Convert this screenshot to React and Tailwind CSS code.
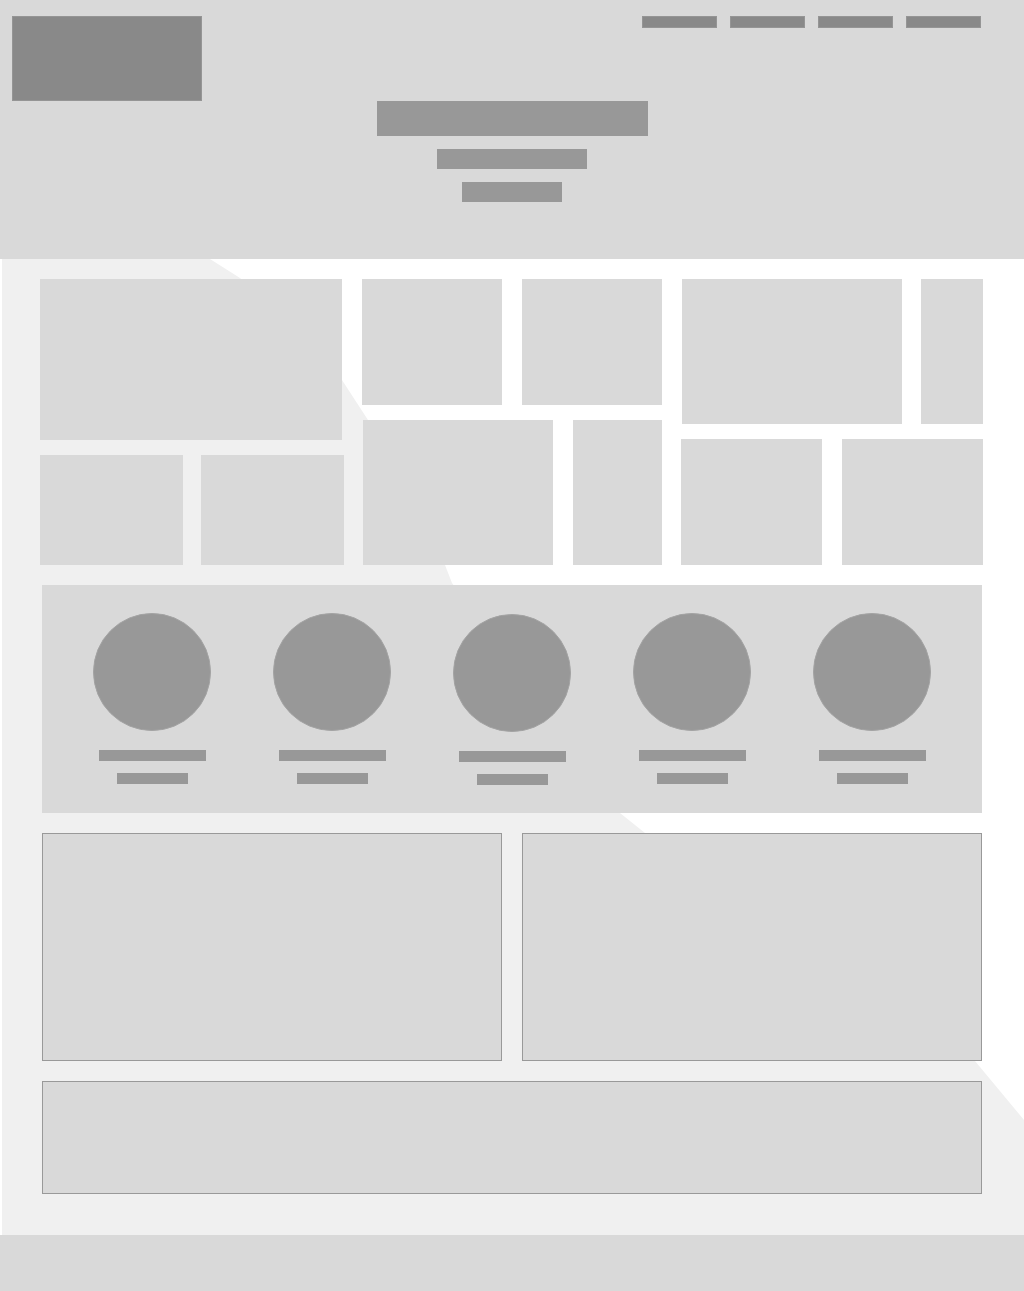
import React from 'react';

const navItems = [1, 2, 3, 4];
const people = [1, 2, 3, 4, 5];

function Block({ className }) {
  return <div className={'bg-[#d9d9d9] ' + className} />;
}

export default function App() {
  return (
    <div className="w-[1024px] bg-white font-['Liberation_Sans',sans-serif]">
      {/* header */}
      <header className="h-[259px] bg-[#d9d9d9]">
        <div className="flex justify-between pl-3 pr-[43px] pt-4">
          <div className="w-[190px] h-[85px] bg-[#898989] border border-[#959595]" />
          <nav className="flex gap-[13px]">
            {navItems.map(n => (
              <div key={n} className="w-[75px] h-[12px] bg-[#898989] border border-[#959595]" />
            ))}
          </nav>
        </div>
        <div className="flex flex-col items-center gap-[13px]">
          <div className="w-[271px] h-[35px] bg-[#989898]" />
          <div className="w-[150px] h-[20px] bg-[#989898]" />
          <div className="w-[100px] h-[20px] bg-[#989898]" />
        </div>
      </header>

      {/* main */}
      <main className="relative pl-[40px] pr-[41px] pt-5 pb-[41px]">
        <svg className="absolute inset-0 w-full h-full" viewBox="0 0 1024 976" preserveAspectRatio="none">
          <polygon
            fill="#f0f0f0"
            points="2,0 210,0 240,19 342,121 368,161 445,306 452,324 620,554 645,574 975,802 1024,861 1024,976 2,976"
          />
        </svg>

        <div className="relative flex flex-col gap-5">
          {/* gallery grid */}
          <section className="flex">
            <div className="w-[304px] flex flex-col gap-[15px]">
              <Block className="w-[302px] h-[161px]" />
              <div className="flex gap-[18px]">
                <Block className="w-[143px] h-[110px]" />
                <Block className="w-[143px] h-[110px]" />
              </div>
            </div>
            <div className="w-[300px] ml-[18px] flex flex-col gap-[15px]">
              <div className="flex gap-5">
                <Block className="w-[140px] h-[126px]" />
                <Block className="w-[140px] h-[126px]" />
              </div>
              <div className="flex gap-5 ml-px">
                <Block className="w-[190px] h-[145px]" />
                <Block className="w-[89px] h-[145px]" />
              </div>
            </div>
            <div className="w-[302px] ml-[19px] flex flex-col gap-[15px]">
              <div className="flex gap-[19px] ml-px">
                <Block className="w-[220px] h-[145px]" />
                <Block className="w-[62px] h-[145px]" />
              </div>
              <div className="flex gap-5">
                <Block className="w-[141px] h-[126px]" />
                <Block className="w-[141px] h-[126px]" />
              </div>
            </div>
          </section>

          {/* team */}
          <section className="ml-[2px] mr-px h-[228px] bg-[#d9d9d9] pl-5 pt-[28px]">
            <div className="grid grid-cols-[repeat(5,180px)]">
              {people.map(p => (
                <div key={p} className={'flex flex-col items-center' + (p === 3 ? ' pt-px' : '')}>
                  <div className="w-[118px] h-[118px] rounded-full bg-[#989898] border border-[#a3a3a3]" />
                  <div className="mt-[19px] w-[107px] h-[11px] bg-[#989898]" />
                  <div className="mt-[12px] w-[71px] h-[11px] bg-[#989898]" />
                </div>
              ))}
            </div>
          </section>

          {/* two cards */}
          <section className="ml-[2px] mr-px flex gap-5">
            <div className="flex-1 h-[228px] bg-[#d9d9d9] border border-[#999]" />
            <div className="flex-1 h-[228px] bg-[#d9d9d9] border border-[#999]" />
          </section>

          <section className="ml-[2px] mr-px h-[113px] bg-[#d9d9d9] border border-[#999]" />
        </div>
      </main>

      <footer className="h-[56px] bg-[#d9d9d9]" />
    </div>
  );
}
